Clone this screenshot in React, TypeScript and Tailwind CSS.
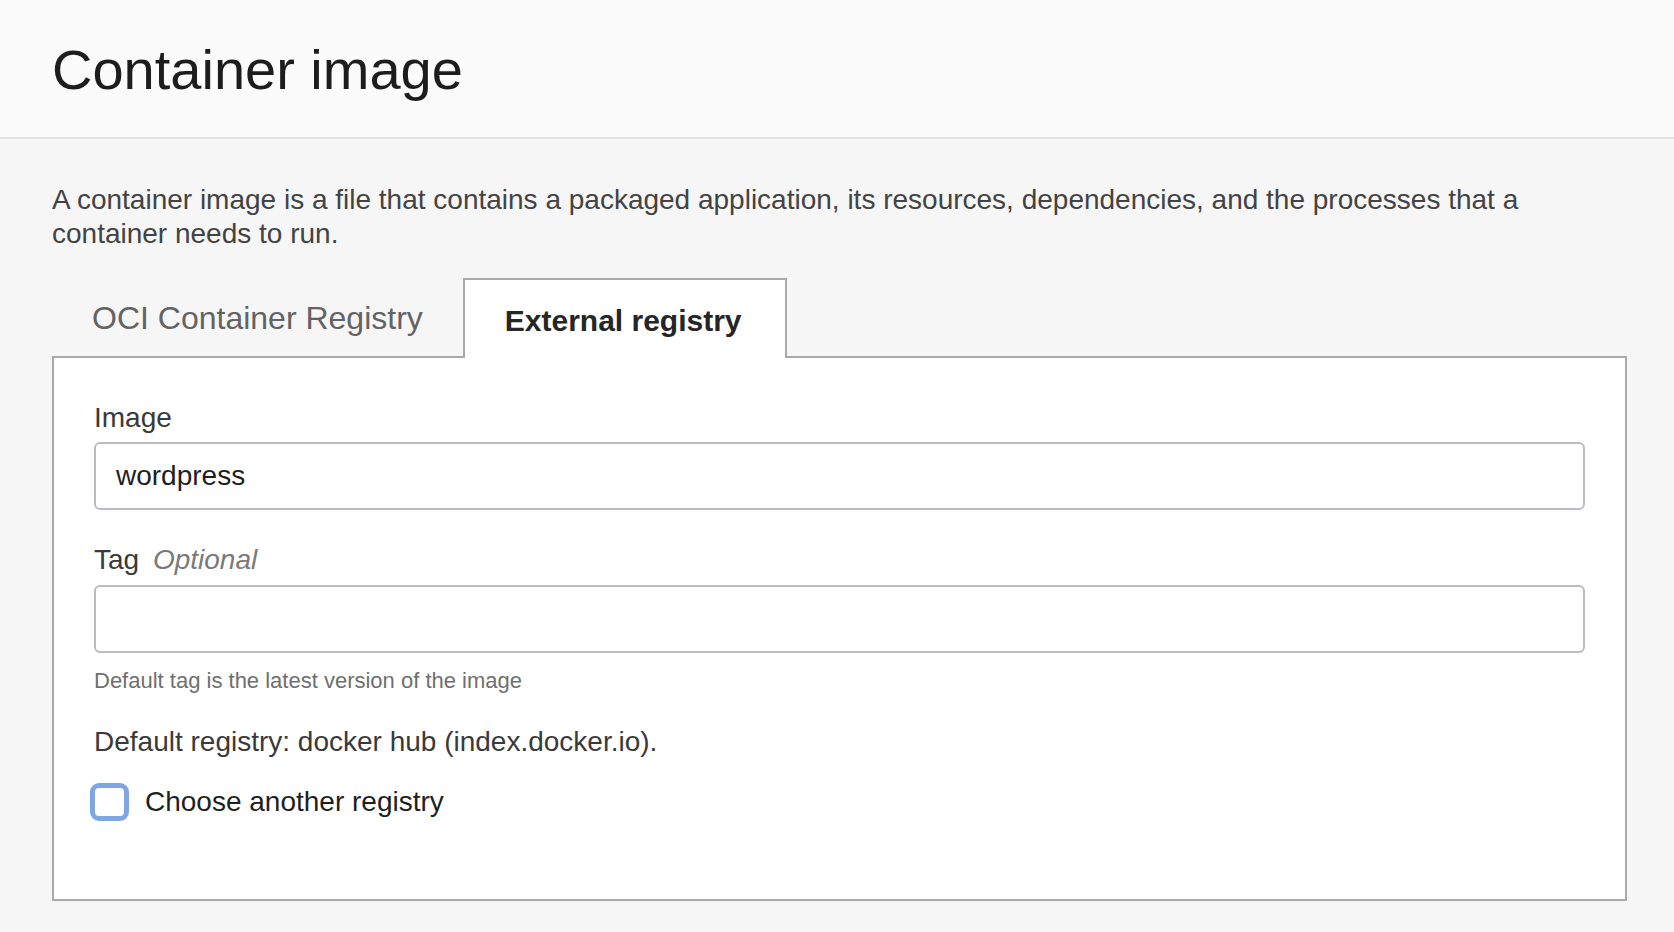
import React, { useState } from 'react';

const tabs = ['OCI Container Registry', 'External registry'];

export default function App() {
  const [activeTab, setActiveTab] = useState('External registry');
  const [image, setImage] = useState('wordpress');
  const [tag, setTag] = useState('');
  const [otherRegistry, setOtherRegistry] = useState(false);

  return (
    <div className="min-h-[932px] w-full bg-[#f6f6f6] font-['Liberation_Sans',Arial,sans-serif]">
      <header className="h-[139px] bg-[#fbfbfb] border-b-2 border-[#e4e4e4] flex items-center pl-[52px]">
        <h1 className="text-[56px] leading-none text-[#1d1d1d] mt-[2px]">Container image</h1>
      </header>

      <main className="pl-[52px] pr-[47px] pt-[44px]">
        <p className="text-[28px] leading-[34px] text-[#434343] pr-[40px]">
          A container image is a file that contains a packaged application, its resources, dependencies, and the processes that a container needs to run.
        </p>

        {/* Tabs */}
        <div className="flex mt-[27px] relative z-10">
          {tabs.map((tab) => (
            <button
              key={tab}
              onClick={() => setActiveTab(tab)}
              className={
                activeTab === tab
                  ? 'h-[80px] pl-[40px] pr-[43px] -mb-[2px] bg-white border-2 border-b-0 border-[#a9a9a9] text-[30px] font-bold text-[#262626] pt-[2px]'
                  : 'h-[78px] px-[40px] text-[32px] text-[#636363] pt-[2px]'
              }
            >
              {tab}
            </button>
          ))}
        </div>

        {/* Panel */}
        <div className="bg-white border-2 border-[#a9a9a9] h-[545px] px-[40px] pt-[43px]">
          <label className="block text-[28px] leading-[34px] text-[#3a3a3a]">Image</label>
          <input
            value={image}
            onChange={(e) => setImage(e.target.value)}
            className="mt-[7px] w-full h-[68px] rounded-[6px] border-2 border-[#b9bdc1] px-[20px] text-[28px] text-[#1f1f1f] outline-none"
          />

          <label className="block mt-[33px] text-[28px] leading-[34px] text-[#3a3a3a]">
            Tag <span className="ml-[6px] italic text-[#7a7a7a]">Optional</span>
          </label>
          <input
            value={tag}
            onChange={(e) => setTag(e.target.value)}
            className="mt-[8px] w-full h-[68px] rounded-[6px] border-2 border-[#b9bdc1] px-[20px] text-[28px] text-[#1f1f1f] outline-none"
          />
          <p className="mt-[14px] text-[22px] leading-[28px] text-[#6f6f6f]">Default tag is the latest version of the image</p>

          <p className="mt-[30px] text-[28px] leading-[34px] text-[#3a3a3a]">Default registry: docker hub (index.docker.io).</p>

          <label className="mt-[24px] flex items-center gap-[16px] cursor-pointer -ml-[4px]">
            <span
              onClick={() => setOtherRegistry(!otherRegistry)}
              className="w-[39px] h-[38px] rounded-[9px] border-[5px] border-[#7fa6e3] bg-white flex items-center justify-center"
            >
              {otherRegistry && <span className="w-[16px] h-[16px] bg-[#7fa6e3] rounded-[2px]" />}
            </span>
            <span className="text-[28px] leading-[34px] text-[#1f1f1f]">Choose another registry</span>
          </label>
        </div>
      </main>
    </div>
  );
}
